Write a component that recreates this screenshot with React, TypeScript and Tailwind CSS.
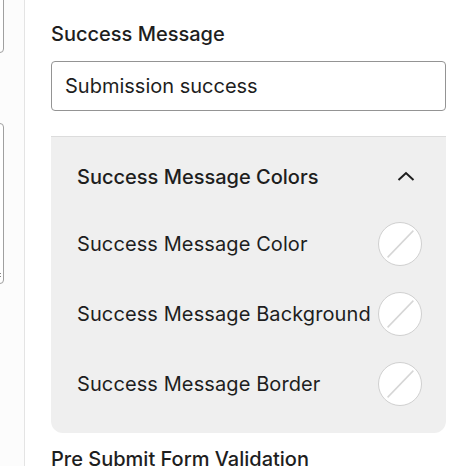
import React from "react";

const font = { fontFamily: "Inter, 'Noto Sans', sans-serif" };

function NoColor() {
  return (
    <span className="relative flex h-[44px] w-[44px] shrink-0 items-center justify-center overflow-hidden rounded-full border border-[#d0d0d0] bg-white">
      <svg viewBox="0 0 44 44" className="absolute inset-0 h-full w-full">
        <line x1="9" y1="36" x2="36" y2="8" stroke="#d6d6d6" strokeWidth="1.6" />
      </svg>
    </span>
  );
}

function ColorRow({ label }: { label: string }) {
  return (
    <div className="flex h-[70px] items-center justify-between">
      <span className="text-[20px] tracking-[0.1px] text-[#1e1e1e]">{label}</span>
      <NoColor />
    </div>
  );
}

export default function App() {
  return (
    <div className="flex h-[466px] w-[470px] overflow-hidden bg-white" style={font}>
      {/* previous column, clipped */}
      <div className="w-[25px] shrink-0 border-r border-[#e4e4e4] bg-[#fcfcfc]">
        <div className="ml-[-40px] mt-[-10px] h-[63px] w-[44px] rounded-[4px] border border-[#a0a0a0] bg-white" />
        <div className="relative ml-[-40px] mt-[70px] h-[161px] w-[44px] rounded-[4px] border border-[#a0a0a0] bg-white">
          <svg viewBox="0 0 8 8" className="absolute bottom-[3px] right-[1px] h-[8px] w-[8px]">
            <line x1="7" y1="1" x2="1" y2="7" stroke="#888" strokeWidth="1" />
            <line x1="7" y1="4" x2="4" y2="7" stroke="#888" strokeWidth="1" />
          </svg>
        </div>
      </div>

      <div className="flex w-[395px] shrink-0 flex-col pl-[26px] pt-[21px]">
        <h2 className="shrink-0 text-[20px] font-medium leading-[26px] text-[#1e1e1e]">Success Message</h2>
        <div className="mt-[14px] flex h-[50px] w-[395px] shrink-0 items-center rounded-[4px] border border-[#949494] px-[13px] text-[20px] text-[#1e1e1e]">
          Submission success
        </div>

        <div className="mt-[25px] w-[395px] shrink-0 rounded-b-[12px] border-t border-[#dcdcdc] bg-[#efefef] pb-[14px] pl-[26px] pr-[24px]">
          <div className="flex h-[72px] items-center justify-between pt-[8px]">
            <span className="text-[20px] font-medium text-[#1e1e1e]">Success Message Colors</span>
            <svg viewBox="0 0 24 24" className="mr-[4px] h-[24px] w-[24px]">
              <path d="M4.5 15 12 8l7.5 7" fill="none" stroke="#1e1e1e" strokeWidth="2" />
            </svg>
          </div>
          <ColorRow label="Success Message Color" />
          <ColorRow label="Success Message Background" />
          <ColorRow label="Success Message Border" />
        </div>

        <h2 className="mt-[13px] shrink-0 text-[20px] font-medium leading-[26px] text-[#1e1e1e]">
          Pre Submit Form Validation
        </h2>
      </div>
    </div>
  );
}
